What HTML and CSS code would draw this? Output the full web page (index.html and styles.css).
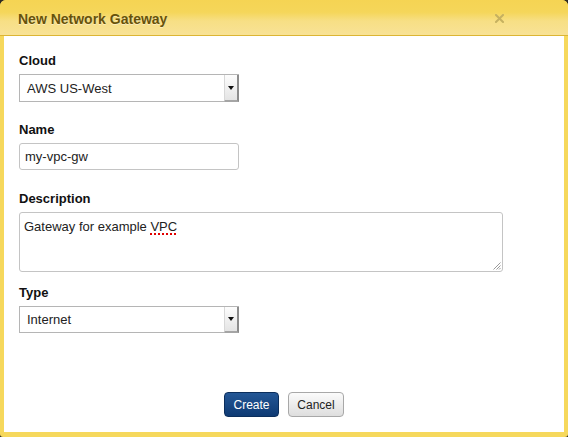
FILE: index.html
```html
<!DOCTYPE html>
<html>
<head>
<meta charset="utf-8">
<link rel="stylesheet" href="styles.css">
</head>
<body>
<div class="dialog">
  <div class="dialog-header">
    <h1 class="dialog-title">New Network Gateway</h1>
    <svg class="close" width="9" height="9" viewBox="0 0 9 9"><path d="M1 1 L8 8 M8 1 L1 8" stroke="#c6b160" stroke-width="2" stroke-linecap="square" fill="none"/></svg>
  </div>
  <form class="dialog-body">
    <div class="field field-cloud">
      <label class="label">Cloud</label>
      <div class="select">
        <span class="select-value">AWS US-West</span>
        <span class="select-arrow"><span class="tri"></span></span>
      </div>
    </div>
    <div class="field field-name">
      <label class="label">Name</label>
      <div class="input">my-vpc-gw</div>
    </div>
    <div class="field field-desc">
      <label class="label">Description</label>
      <div class="textarea">Gateway for example <span class="misspelled">VPC</span>
        <svg class="grip" width="9" height="9" viewBox="0 0 9 9"><path d="M8.5 1.5 L1.5 8.5 M8.5 4.5 L4.5 8.5 M8.5 7 L7 8.5" stroke="#9a9a9a" stroke-width="1" fill="none"/></svg>
      </div>
    </div>
    <div class="field field-type">
      <label class="label">Type</label>
      <div class="select">
        <span class="select-value">Internet</span>
        <span class="select-arrow"><span class="tri"></span></span>
      </div>
    </div>
    <div class="actions">
      <button type="button" class="btn btn-primary">Create</button>
      <button type="button" class="btn btn-default">Cancel</button>
    </div>
  </form>
</div>
</body>
</html>
```
FILE: styles.css
```css
html, body {
  margin: 0;
  padding: 0;
  background: #2e2a22;
}
body {
  font-family: "Liberation Sans", Arial, Helvetica, sans-serif;
  width: 568px;
  height: 437px;
  overflow: hidden;
}
.dialog {
  width: 568px;
  height: 437px;
  box-sizing: border-box;
  background: #f6d85c;
  border-radius: 6px 6px 3px 3px;
  display: flex;
  flex-direction: column;
  padding: 0 4px 5px 4px;
}
.dialog-header {
  height: 35px;
  margin: 0 -4px;
  padding: 0 18px;
  border-radius: 6px 6px 0 0;
  background: linear-gradient(#f5d453 0%, #f5d65a 35%, #f7df85 60%, #f8e296 100%);
  border-bottom: 1px solid #dcb534;
  display: flex;
  align-items: center;
  justify-content: space-between;
}
.dialog-title {
  margin: 0;
  font-size: 14px;
  font-weight: bold;
  color: #67520a;
  text-shadow: 0 1px 0 rgba(255, 255, 255, 0.45);
  line-height: 16px;
  position: relative;
  top: 1px;
}
.close {
  margin-right: 46px;
  position: relative;
  top: 1px;
}
.dialog-body {
  flex: 1;
  background: #fff;
  margin: 0;
  padding: 17px 15px 15px 15px;
  display: flex;
  flex-direction: column;
}
.field-name { margin-top: 20px; }
.field-desc { margin-top: 21px; }
.field-type { margin-top: 13px; }
.label {
  display: block;
  font-size: 13px;
  font-weight: bold;
  line-height: 16px;
  color: #111;
  margin-bottom: 5px;
}
.select {
  width: 220px;
  height: 28px;
  box-sizing: border-box;
  border: 1px solid #b5b5b5;
  background: #fff;
  display: flex;
  align-items: stretch;
  font-size: 13px;
  color: #222;
}
.field-type .select { height: 27px; }
.select-value {
  flex: 1;
  padding-left: 7px;
  display: flex;
  align-items: center;
}
.select-arrow {
  width: 15px;
  box-sizing: border-box;
  background: linear-gradient(#fdfdfd, #e4e4e4);
  border-left: 1px solid #d8d8d8;
  border-right: 2px solid #8c8c8c;
  border-bottom: 2px solid #a5a5a5;
  margin: 0 -1px -1px 0;
  display: flex;
  align-items: center;
  justify-content: center;
}
.tri {
  width: 0;
  height: 0;
  border-left: 3px solid transparent;
  border-right: 3px solid transparent;
  border-top: 4px solid #111;
}
.input {
  width: 220px;
  height: 27px;
  box-sizing: border-box;
  border: 1px solid #c4c4c4;
  border-radius: 3px;
  padding: 0 5px;
  font-size: 13px;
  color: #222;
  display: flex;
  align-items: center;
}
.textarea {
  position: relative;
  width: 484px;
  height: 60px;
  box-sizing: border-box;
  border: 1px solid #c4c4c4;
  border-radius: 3px;
  padding: 6px 4px;
  font-size: 13px;
  line-height: 16px;
  color: #222;
}
.misspelled {
  text-decoration: underline dotted #e00000;
  text-decoration-thickness: 2px;
  text-underline-offset: 2px;
}
.grip {
  position: absolute;
  right: 1px;
  bottom: 1px;
}
.actions {
  margin-top: auto;
  display: flex;
  justify-content: center;
  gap: 9px;
}
.btn {
  font-family: "Liberation Sans", Arial, Helvetica, sans-serif;
  font-size: 12px;
  height: 25px;
  border-radius: 4px;
  padding: 0;
  cursor: pointer;
}
.btn-primary {
  width: 55px;
  color: #fff;
  background: linear-gradient(#245796, #0e3a73);
  border: 1px solid #0b2e5c;
}
.btn-default {
  width: 56px;
  color: #222;
  background: linear-gradient(#fbfbfb, #dedede);
  border: 1px solid #a8a8a8;
}
```
